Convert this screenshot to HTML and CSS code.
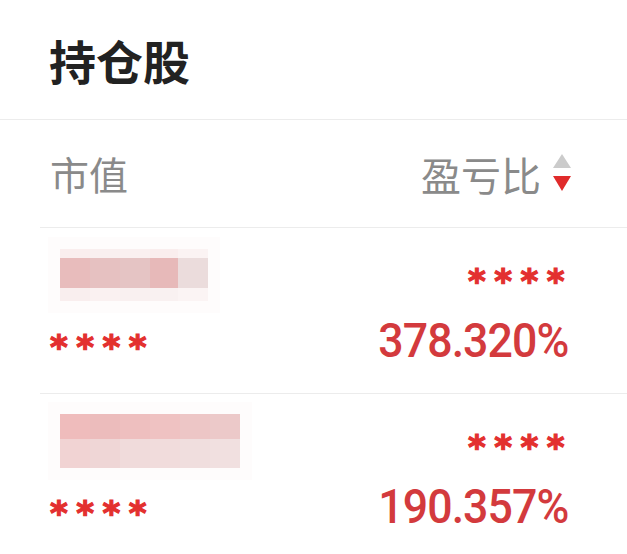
FILE: index.html
```html
<!DOCTYPE html>
<html lang="zh-CN">
<head>
    <meta charset="UTF-8">
    <meta name="viewport" content="width=device-width, initial-scale=1.0">
    <title>持仓股</title>
    <link rel="stylesheet" href="styles.css">
</head>
<body>
    <!-- Title -->
    <div class="page-title">持仓股</div>

    <!-- Column header -->
    <div class="list-header">
        <span class="col-label">市值</span>
        <span class="col-label sortable">
            盈亏比
            <svg class="sort-icon" width="20" height="40" viewBox="0 0 20 40">
                <polygon points="10,0 19,14 1,14" fill="#cbcbcb"/>
                <polygon points="1,22 19,22 10,37" fill="#e02b2b"/>
            </svg>
        </span>
    </div>

    <!-- Holdings -->
    <div class="holding-row">
        <div class="row-line top">
            <div class="mosaic mosaic-a">
                <span class="c a1"></span><span class="c a2"></span><span class="c a3"></span><span class="c a4"></span><span class="c a5"></span>
                <span class="m a6"></span><span class="m a7"></span><span class="m a8"></span><span class="m a9"></span><span class="m a10"></span>
                <span class="b a1"></span><span class="b a2"></span><span class="b a3"></span><span class="b a4"></span><span class="b a5"></span>
            </div>
            <span class="masked">****</span>
        </div>
        <div class="row-line bottom">
            <span class="masked">****</span>
            <span class="ratio">378.320%</span>
        </div>
    </div>

    <div class="holding-row">
        <div class="row-line top">
            <div class="mosaic mosaic-b">
                <span class="t b1"></span><span class="t b2"></span><span class="t b3"></span><span class="t b4"></span><span class="t b5"></span><span class="t b6"></span>
                <span class="l b7"></span><span class="l b8"></span><span class="l b9"></span><span class="l b10"></span><span class="l b11"></span><span class="l b12"></span>
            </div>
            <span class="masked">****</span>
        </div>
        <div class="row-line bottom">
            <span class="masked">****</span>
            <span class="ratio">190.357%</span>
        </div>
    </div>
</body>
</html>
```

FILE: styles.css
```css
body {
    margin: 0;
    background: #fff;
    font-family: "Noto Sans CJK SC", "Noto Sans", sans-serif;
    width: 627px;
    overflow: hidden;
}

.page-title {
    height: 119px;
    display: flex;
    align-items: center;
    padding-left: 49px;
    font-size: 47px;
    font-weight: 700;
    color: #222;
    border-bottom: 1px solid #ececec;
}

.list-header {
    height: 107px;
    margin-left: 40px;
    padding: 0 55px 0 10px;
    display: flex;
    justify-content: space-between;
    align-items: center;
    border-bottom: 1px solid #ececec;
}

.col-label {
    font-size: 39px;
    color: #8a8a8a;
    line-height: 1;
}

.sortable {
    display: flex;
    align-items: center;
    gap: 11px;
    font-size: 40px;
}

.sort-icon {
    display: block;
}

.holding-row {
    margin-left: 40px;
    padding: 16px 59px 17px 10px;
    border-bottom: 1px solid #ececec;
}

.holding-row:last-child {
    border-bottom: none;
}

.row-line {
    display: flex;
    justify-content: space-between;
    align-items: center;
}

.row-line.top {
    height: 62px;
}

.row-line.bottom {
    height: 70px;
}

.masked {
    font-family: "DejaVu Sans", sans-serif;
    font-weight: 700;
    font-size: 34px;
    letter-spacing: 8.5px;
    margin-right: -5px;
    color: #e3302f;
    -webkit-text-stroke: 1.2px #e3302f;
    line-height: 1;
    padding-top: 11px;
}

.ratio {
    font-family: Roboto, "Liberation Sans", sans-serif;
    font-weight: 500;
    font-size: 48px;
    letter-spacing: -1px;
    color: #d33a3d;
    line-height: 1;
    transform: scaleX(0.93);
    transform-origin: right center;
}

/* pixelated (blurred) stock names */
.mosaic {
    display: grid;
    margin-left: 10px;
    box-shadow: 0 0 0 12px #fefcfc;
}

.mosaic-a {
    grid-template-columns: 30px 30px 30px 28px 30px;
    grid-template-rows: 9px 30px 13px;
}

.mosaic-b {
    grid-template-columns: repeat(6, 30px);
    grid-template-rows: 25px 29px;
}

.c.a1 { background: #faeeee; }
.c.a2 { background: #f9efef; }
.c.a3 { background: #faf0f0; }
.c.a4 { background: #faeeee; }
.c.a5 { background: #fbf3f3; }
.a6 { background: #e8bcbc; }
.a7 { background: #e6c1c1; }
.a8 { background: #e5c4c4; }
.a9 { background: #e7b9b9; }
.a10 { background: #ebdcdc; }
.b.a1 { background: #f9eeee; }
.b.a2 { background: #faf1f1; }
.b.a3 { background: #f9f0f0; }
.b.a4 { background: #f9f1f1; }
.b.a5 { background: #fbf4f4; }

.b1 { background: #efbcbc; }
.b2 { background: #ecbcbc; }
.b3 { background: #eebfbf; }
.b4 { background: #efc2c2; }
.b5 { background: #edc6c6; }
.b6 { background: #ecc9c9; }
.b7 { background: #f1d3d3; }
.b8 { background: #efd6d6; }
.b9 { background: #f0dbdb; }
.b10 { background: #f1dcdc; }
.b11 { background: #f0dede; }
.b12 { background: #f1e0e0; }
```
